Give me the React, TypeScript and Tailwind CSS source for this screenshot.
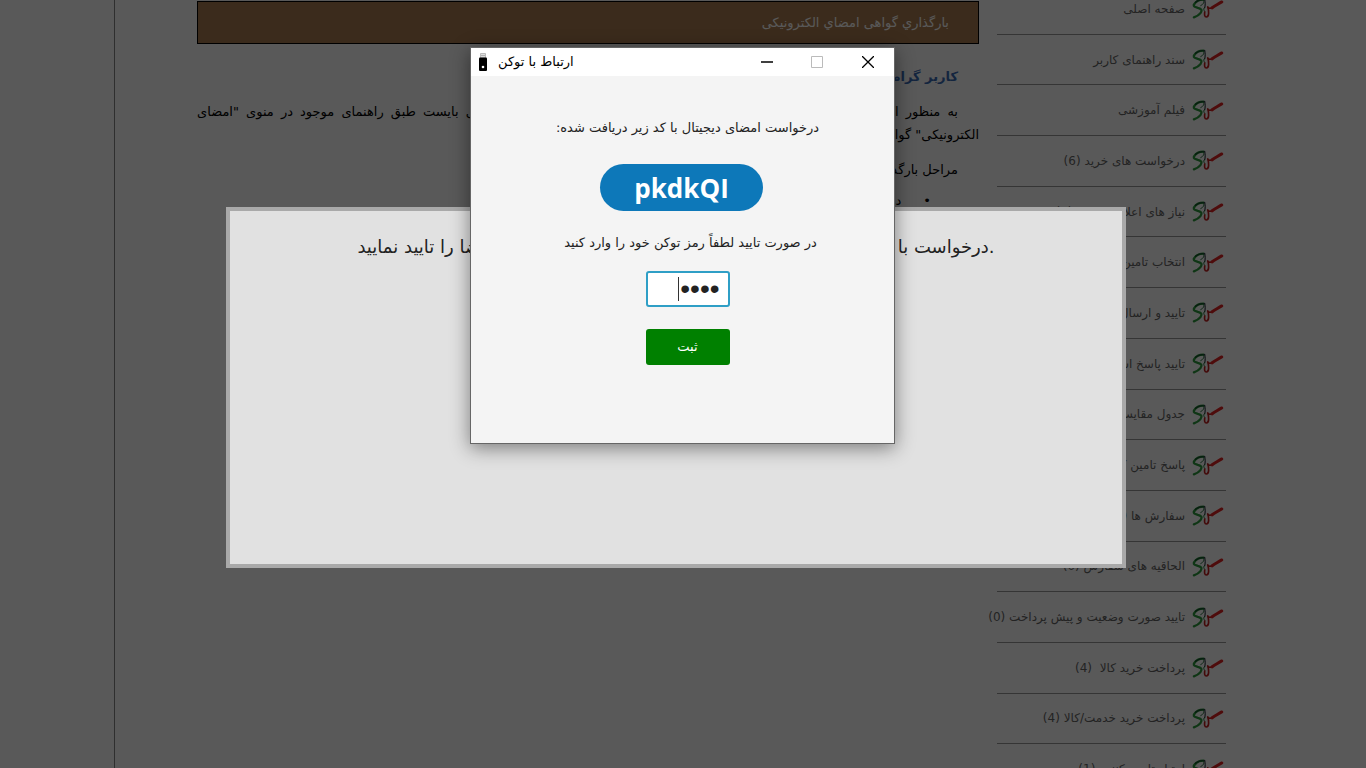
import { useState } from 'react';

const menuItems = [
  'صفحه اصلی',
  'سند راهنمای کاربر',
  'فیلم آموزشی',
  'درخواست های خرید (6)',
  'نیاز های اعلام شده ها (0)',
  'انتخاب تامین کننده (0)',
  'تایید و ارسال سفارش (0)',
  'تایید پاسخ استعلام (0)',
  'جدول مقایسه ای (0)',
  'پاسخ تامین کننده (0)',
  'سفارش ها (0)',
  'الحاقیه های سفارش (0)',
  'تایید صورت وضعیت و پیش پرداخت (0)',
  'پرداخت خرید کالا \u00a0(4)',
  'پرداخت خرید خدمت/کالا (4)',
  'امتیاز تامین کننده (1)',
];

function MenuLogo() {
  return (
    <svg viewBox="0 0 96 64" className="h-[21px] w-8 shrink-0" fill="none" strokeLinecap="round" aria-hidden="true">
      <path d="M34 5C22 5 10 12 5 20c-2 7 5 8 12 10 12 3 14 8 8 16-5 7-12 10-20 13" stroke="#2d9a3c" strokeWidth="7" />
      <path d="M10 13C18 6 27 4 34 5" stroke="#14532d" strokeWidth="4" />
      <path d="M34 5c4 8 0 14-8 18" stroke="#1d6b35" strokeWidth="3" />
      <path d="M38 4c2 10 2 18 0 26" stroke="#111827" strokeWidth="3" />
      <path d="M38 28c-5 5-3 9 0 13" stroke="#1d6b35" strokeWidth="3" />
      <path d="M64 28C56 33 50 32 47 27c4 12 5 31-4 31-6 0-6-8-5-15" stroke="#c01e1e" strokeWidth="5" strokeLinejoin="round" />
      <path d="M90 12C82 16 74 22 60 30" stroke="#e02424" strokeWidth="9" />
    </svg>
  );
}

function SideMenu() {
  return (
    <nav className="-mt-4 grid min-h-[811px] w-[229px] shrink-0 auto-rows-fr grid-cols-[minmax(0,1fr)]">
      {menuItems.map((item) => (
        <a
          key={item}
          href="#"
          className="flex items-center gap-[7px] border-b border-[#999] pr-[2px] text-xs whitespace-nowrap text-[#666]"
        >
          <MenuLogo />
          {item}
        </a>
      ))}
    </nav>
  );
}

function Article() {
  return (
    <main className="min-w-0 flex-1 pt-px text-[13px] leading-[23px] text-black">
      <div className="flex h-[43px] items-center border border-black bg-[#a97b50] px-[29px] text-white">
        بارگذاري گواهی امضاي الکترونیکی
      </div>
      <h1 className="mt-[21px] px-[21px] font-bold text-[#3a6cb4]">کاربر گرامی،</h1>
      <p className="mt-3">
        <span className="block pr-[21px] [text-align-last:justify]">
          به منظور استفاده از امضای الکترونیکی در سامانه تدارکات الکترونیکی دولت ابتدا می بایست طبق راهنمای موجود در منوی "امضای
        </span>
        الکترونیکی" گواهی خود را بارگذاری نمایید.
      </p>
      <p className="mt-3 px-[21px]">مراحل بارگذاری گواهی:</p>
      <ul className="mt-2">
        <li className="flex gap-[22px] pr-12">
          <span>•</span>
          دریافت گواهی
        </li>
      </ul>
    </main>
  );
}

function TokenIcon() {
  return (
    <svg viewBox="0 0 8 18" className="h-[18px] w-2" aria-hidden="true">
      <path d="M1.5.5h5V5h-5z" fill="#ddd" stroke="#bbb" strokeWidth="1" />
      <path d="M3 2v1M5 2v1" stroke="#888" />
      <rect y="4.500" width="8" height="13.500" rx="1" fill="#000" />
      <circle cx="4" cy="14" r="1.300" fill="#fff" />
    </svg>
  );
}

function TokenWindow() {
  const [pin, setPin] = useState('1234');

  return (
    <section
      role="dialog"
      aria-label="ارتباط با توکن"
      className="absolute top-[47px] left-[470px] z-30 min-h-[397px] w-[425px] border border-[#666] bg-[#f4f4f4] text-[#222] shadow-[0_4px_18px_rgba(0,0,0,0.45)]"
    >
      <header dir="ltr" className="flex h-7 items-center bg-white pl-2 text-[13px] text-black">
        <TokenIcon />
        <span className="ml-[11px] flex-1">ارتباط با توکن</span>
        <button type="button" aria-label="Minimize" className="flex w-[50px] justify-center">
          <svg viewBox="0 0 12 12" className="size-3" stroke="#000" strokeWidth="1.500"><path d="M0 6h12" /></svg>
        </button>
        <button type="button" aria-label="Maximize" className="flex w-[50px] justify-center" disabled>
          <svg viewBox="0 0 12 12" className="size-3" fill="none" stroke="#bbb"><path d="M.5.5h11v11H.5z" /></svg>
        </button>
        <button type="button" aria-label="Close" className="flex w-[52px] justify-center">
          <svg viewBox="0 0 12 12" className="size-3" stroke="#000" strokeWidth="1.300"><path d="m0 0 12 12M12 0 0 12" /></svg>
        </button>
      </header>
      <form className="flex flex-col items-center pt-10 pl-[10px] text-[13px] leading-6" onSubmit={(e) => e.preventDefault()}>
        <p>درخواست امضای دیجیتال با کد زیر دریافت شده:</p>
        <output className="mt-6 mr-3 flex h-[47px] w-[163px] items-center justify-center rounded-full bg-[#0d78b9] font-['Open_Sans',sans-serif] text-[26px] font-bold text-white">
          pkdkQI
        </output>
        <label htmlFor="pin" className="mt-5 pl-[6px]">در صورت تایید لطفاً رمز توکن خود را وارد کنید</label>
        <div className="relative mt-4">
          <input
            id="pin"
            type="password"
            value={pin}
            onChange={(e) => setPin(e.target.value)}
            className="block h-9 w-[84px] rounded-[3px] border-2 border-[#2f9fc6] bg-white px-2 font-['Liberation_Sans',sans-serif] text-[28px] text-[#222] outline-none"
          />
          <span className="absolute top-[6px] left-8 h-6 w-px bg-[#333]" />
        </div>
        <button type="submit" className="mt-[22px] h-9 w-[84px] rounded-[3px] bg-[#008000] text-white">
          ثبت
        </button>
      </form>
    </section>
  );
}

function SignRequest() {
  return (
    <section className="absolute top-[207px] right-[240px] left-[226px] z-20 min-h-[361px] border-4 border-[#a9a9a9] bg-[#e1e1e1] pt-5 text-center text-lg text-[#222]">
      <p dir="ltr" className="leading-8 whitespace-nowrap">
        درخواست با کد فوق به توکن شما ارسال گردید لطفا پس از مرور امضا را تایید نمایید.
      </p>
      <p className="mt-[76px] text-base leading-8">در حال ارتباط با توکن و دریافت اطلاعات امضای دیجیتالی</p>
    </section>
  );
}

export default function App() {
  return (
    <div dir="rtl" className="relative h-screen overflow-hidden bg-white font-['DejaVu_Sans',sans-serif]">
      <div className="pl-[114px]">
        <div className="flex min-h-screen gap-[18px] border-l border-[#888] pr-[140px] pl-[82px]">
          <SideMenu />
          <Article />
        </div>
      </div>
      <div className="absolute inset-0 z-10 bg-black/65" />
      <SignRequest />
      <TokenWindow />
    </div>
  );
}
